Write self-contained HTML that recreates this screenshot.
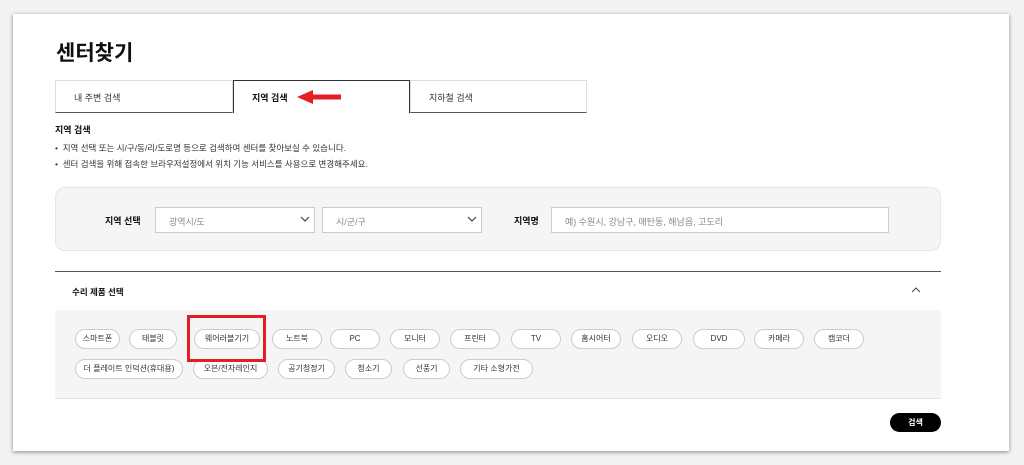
<!DOCTYPE html>
<html><head><meta charset="utf-8"><style>
*{margin:0;padding:0;box-sizing:border-box}
body{width:1024px;height:465px;background:#f3f3f3;font-family:"Liberation Sans","Noto Sans CJK KR",sans-serif;position:relative;overflow:hidden;color:#111}
.card{position:absolute;left:13px;top:14px;width:996px;height:437px;background:#fff;box-shadow:0 1px 4px rgba(0,0,0,.45)}
.a{position:absolute}
.tab{position:absolute;top:80px;height:33px;border:1px solid #ddd;border-bottom:1px solid #555;font-size:9px;padding:10px 0 0 18px;color:#333}
.sel{position:absolute;top:207px;height:26px;border:1px solid #ccc;background:#fff;font-size:9px;color:#888;padding:7px 0 0 13px}
.chip{position:absolute;height:20px;border:1px solid #ccc;border-radius:10px;background:#fff;font-size:8px;color:#333;text-align:center;line-height:18px}
</style></head><body>
<div class="card"></div>
<div class="a" style="left:56px;top:37px;font-size:21px;font-weight:bold">센터찾기</div>
<div class="tab" style="left:55px;width:178px">내 주변 검색</div>
<div class="tab" style="left:233px;width:177px;border:1px solid #333;border-bottom:none;font-weight:bold;color:#111;background:#fff">지역 검색</div>
<div class="tab" style="left:410px;width:177px">지하철 검색</div>
<svg class="a" style="left:295px;top:89px" width="48" height="16"><path d="M2 8 L18 1 L18 5.5 L46 5.5 L46 10.5 L18 10.5 L18 15 Z" fill="#e31e24"/></svg>
<div class="a" style="left:55px;top:123px;font-size:9px;font-weight:bold">지역 검색</div>
<div class="a" style="left:55px;top:140px;font-size:8.5px;color:#333;line-height:16px">• &nbsp;지역 선택 또는 시/구/동/리/도로명 등으로 검색하여 센터를 찾아보실 수 있습니다.<br>• &nbsp;센터 검색을 위해 접속한 브라우저설정에서 위치 기능 서비스를 사용으로 변경해주세요.</div>
<div class="a" style="left:55px;top:187px;width:886px;height:64px;background:#f5f5f5;border:1px solid #e6e6e6;border-radius:10px"></div>
<div class="a" style="left:105px;top:214px;font-size:9px;font-weight:bold">지역 선택</div>
<div class="sel" style="left:155px;width:160px">광역시/도</div>
<div class="sel" style="left:322px;width:160px">시/군/구</div>
<svg class="a" style="left:300px;top:216px" width="10" height="7"><path d="M1 1L5 5L9 1" fill="none" stroke="#444" stroke-width="1.2"/></svg>
<svg class="a" style="left:467px;top:216px" width="10" height="7"><path d="M1 1L5 5L9 1" fill="none" stroke="#444" stroke-width="1.2"/></svg>
<div class="a" style="left:514px;top:214px;font-size:9px;font-weight:bold">지역명</div>
<div class="sel" style="left:551px;width:338px">예) 수원시, 강남구, 매탄동, 해남읍, 고도리</div>
<div class="a" style="left:55px;top:271px;width:886px;height:1px;background:#555"></div>
<div class="a" style="left:72px;top:286px;font-size:8.5px;font-weight:bold">수리 제품 선택</div>
<svg class="a" style="left:911px;top:287px" width="10" height="7"><path d="M1 5L5 1L9 5" fill="none" stroke="#444" stroke-width="1"/></svg>
<div class="a" style="left:55px;top:310px;width:886px;height:89px;background:#f5f5f5;border-bottom:1px solid #e4e4e4"></div>
<div class="chip" style="left:75px;top:329px;width:45px">스마트폰</div>
<div class="chip" style="left:129px;top:329px;width:48px">태블릿</div>
<div class="chip" style="left:194px;top:329px;width:66px">웨어러블기기</div>
<div class="chip" style="left:272px;top:329px;width:50px">노트북</div>
<div class="chip" style="left:330px;top:329px;width:50px">PC</div>
<div class="chip" style="left:390px;top:329px;width:50px">모니터</div>
<div class="chip" style="left:450px;top:329px;width:50px">프린터</div>
<div class="chip" style="left:511px;top:329px;width:50px">TV</div>
<div class="chip" style="left:571px;top:329px;width:50px">홈시어터</div>
<div class="chip" style="left:632px;top:329px;width:50px">오디오</div>
<div class="chip" style="left:693px;top:329px;width:52px">DVD</div>
<div class="chip" style="left:754px;top:329px;width:50px">카메라</div>
<div class="chip" style="left:814px;top:329px;width:50px">캠코더</div>
<div class="chip" style="left:75px;top:359px;width:108px">더 플레이트 인덕션(휴대용)</div>
<div class="chip" style="left:193px;top:359px;width:75px">오븐/전자레인지</div>
<div class="chip" style="left:278px;top:359px;width:57px">공기청정기</div>
<div class="chip" style="left:345px;top:359px;width:47px">청소기</div>
<div class="chip" style="left:403px;top:359px;width:47px">선풍기</div>
<div class="chip" style="left:460px;top:359px;width:73px">기타 소형가전</div>
<div class="a" style="left:187px;top:315px;width:79px;height:47px;border:3px solid #e31e24"></div>
<div class="a" style="left:890px;top:413px;width:51px;height:19px;background:#000;border-radius:10px;color:#fff;font-size:8px;font-weight:bold;text-align:center;line-height:19px">검색</div>
</body></html>
